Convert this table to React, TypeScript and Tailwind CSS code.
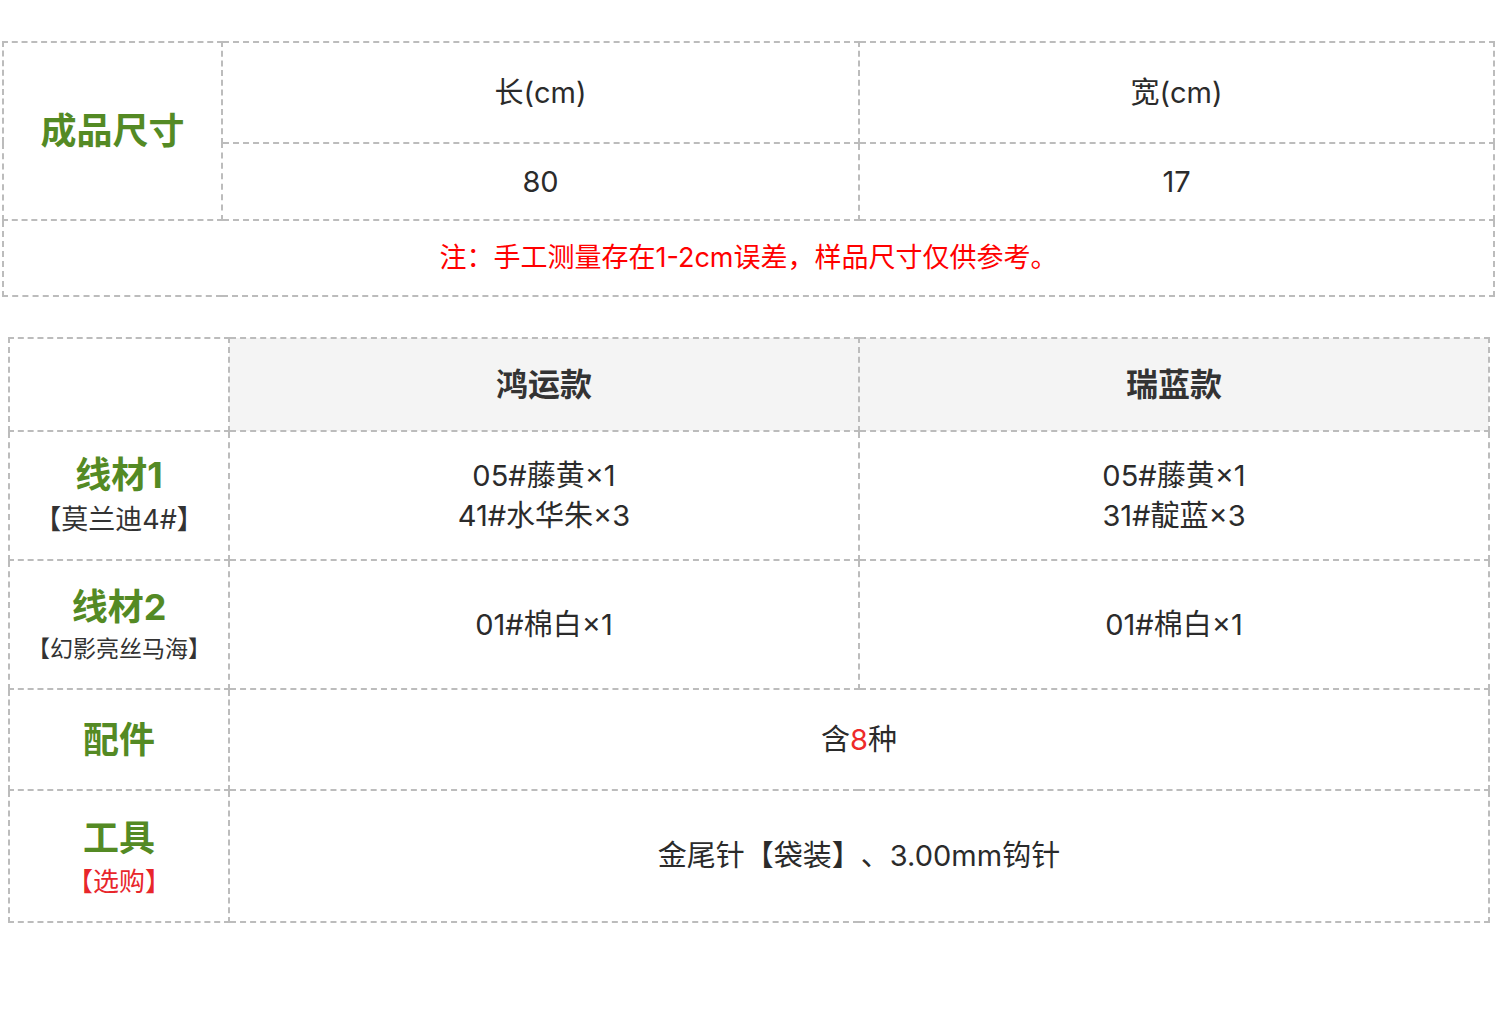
const cell = 'border-2 border-dashed border-[#bcbcbc] text-center align-middle p-0';

// 第一列标题：绿色粗体 + 可选副标题
const RowLabel = ({ title, sub, subClass }: { title: string; sub?: string; subClass?: string }) => (
  <div className="flex flex-col items-center">
    <div className="text-[36px] font-bold leading-[44px] text-[#548a24]">{title}</div>
    {sub && <div className={subClass}>{sub}</div>}
  </div>
);

export default function App() {
  return (
    <div className="min-h-[1010px] w-[1500px] bg-white font-['Inter','Noto_Sans_CJK_SC',sans-serif] text-[#2b2b2b] [text-spacing-trim:space-all]">
      <div className="h-[41px]" />

      {/* 成品尺寸 */}
      <table className="ml-[2px] w-[1493px] table-fixed border-collapse">
        <colgroup>
          <col className="w-[219px]" />
          <col className="w-[637px]" />
          <col />
        </colgroup>
        <tbody>
          <tr className="h-[101px]">
            <td rowSpan={2} className={cell}>
              <span className="text-[36px] font-bold text-[#548a24]">成品尺寸</span>
            </td>
            <td className={`${cell} text-[29px]`}>长(cm)</td>
            <td className={`${cell} text-[29px]`}>宽(cm)</td>
          </tr>
          <tr className="h-[77px]">
            <td className={`${cell} text-[29px]`}>80</td>
            <td className={`${cell} text-[29px]`}>17</td>
          </tr>
          <tr className="h-[76px]">
            <td colSpan={3} className={`${cell} text-[27px] text-[#ff0000]`}>
              注：手工测量存在1-2cm误差，样品尺寸仅供参考。
            </td>
          </tr>
        </tbody>
      </table>

      <div className="h-[40px]" />

      {/* 线材 / 配件 / 工具 */}
      <table className="ml-[8px] w-[1482px] table-fixed border-collapse">
        <colgroup>
          <col className="w-[220px]" />
          <col className="w-[630px]" />
          <col />
        </colgroup>
        <tbody>
          <tr className="h-[93px]">
            <td className={cell} />
            <td className={`${cell} bg-[#f4f4f4] text-[32px] font-bold text-[#333]`}>鸿运款</td>
            <td className={`${cell} bg-[#f4f4f4] text-[32px] font-bold text-[#333]`}>瑞蓝款</td>
          </tr>
          <tr className="h-[129px]">
            <td className={`${cell} pt-[4px]`}>
              <RowLabel title="线材1" sub="【莫兰迪4#】" subClass="text-[27px] leading-[46px] text-[#333]" />
            </td>
            <td className={`${cell} text-[29px] leading-[40px]`}>
              <div>05#藤黄×1</div>
              <div>41#水华朱×3</div>
            </td>
            <td className={`${cell} text-[29px] leading-[40px]`}>
              <div>05#藤黄×1</div>
              <div>31#靛蓝×3</div>
            </td>
          </tr>
          <tr className="h-[129px]">
            <td className={`${cell} pt-[4px]`}>
              <RowLabel title="线材2" sub="【幻影亮丝马海】" subClass="text-[23px] leading-[40px] text-[#333]" />
            </td>
            <td className={`${cell} text-[29px]`}>01#棉白×1</td>
            <td className={`${cell} text-[29px]`}>01#棉白×1</td>
          </tr>
          <tr className="h-[101px]">
            <td className={cell}>
              <RowLabel title="配件" />
            </td>
            <td colSpan={2} className={`${cell} text-[29px]`}>
              含<span className="text-[#ee2a2a]">8</span>种
            </td>
          </tr>
          <tr className="h-[132px]">
            <td className={`${cell} pt-[8px]`}>
              <RowLabel title="工具" sub="【选购】" subClass="text-[26px] leading-[44px] text-[#e8262b]" />
            </td>
            <td colSpan={2} className={`${cell} text-[29px]`}>
              金尾针【袋装】、3.00mm钩针
            </td>
          </tr>
        </tbody>
      </table>
    </div>
  );
}
